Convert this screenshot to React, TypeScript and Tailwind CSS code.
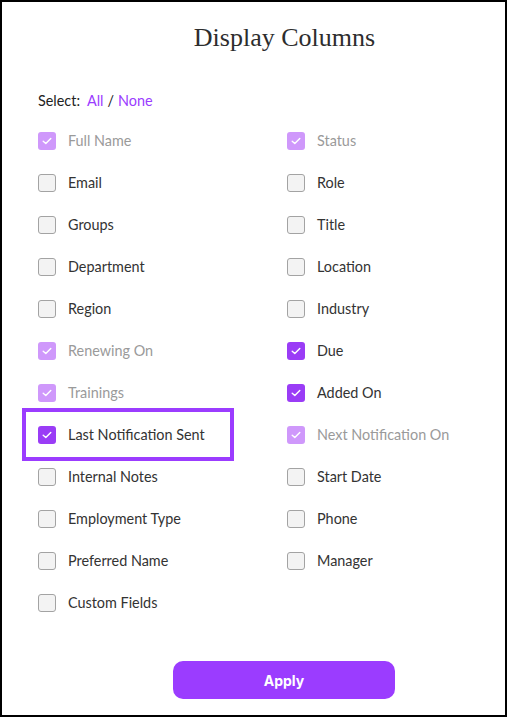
import React from 'react';

type Item = { label: string; state: 'off' | 'on' | 'locked'; highlight?: boolean };

const left: Item[] = [
  { label: 'Full Name', state: 'locked' },
  { label: 'Email', state: 'off' },
  { label: 'Groups', state: 'off' },
  { label: 'Department', state: 'off' },
  { label: 'Region', state: 'off' },
  { label: 'Renewing On', state: 'locked' },
  { label: 'Trainings', state: 'locked' },
  { label: 'Last Notification Sent', state: 'on', highlight: true },
  { label: 'Internal Notes', state: 'off' },
  { label: 'Employment Type', state: 'off' },
  { label: 'Preferred Name', state: 'off' },
  { label: 'Custom Fields', state: 'off' },
];

const right: Item[] = [
  { label: 'Status', state: 'locked' },
  { label: 'Role', state: 'off' },
  { label: 'Title', state: 'off' },
  { label: 'Location', state: 'off' },
  { label: 'Industry', state: 'off' },
  { label: 'Due', state: 'on' },
  { label: 'Added On', state: 'on' },
  { label: 'Next Notification On', state: 'locked' },
  { label: 'Start Date', state: 'off' },
  { label: 'Phone', state: 'off' },
  { label: 'Manager', state: 'off' },
];

function Box({ state }: { state: Item['state'] }) {
  if (state === 'off') {
    return <span className="w-[18px] h-[18px] rounded-[3px] border border-[#a3a3a3] bg-[#f3f3f3] shrink-0" />;
  }
  return (
    <span
      className={`w-[18px] h-[18px] rounded-[3px] shrink-0 flex items-center justify-center ${
        state === 'on' ? 'bg-[#9a3cf6]' : 'bg-[#cf98fb]'
      }`}
    >
      <svg width="12" height="12" viewBox="0 0 12 12" fill="none">
        <path d="M2.2 6.2 L4.8 8.6 L9.8 3.4" stroke="white" strokeWidth="1.4" strokeLinecap="round" strokeLinejoin="round" />
      </svg>
    </span>
  );
}

function Row({ item }: { item: Item }) {
  return (
    <div className="relative h-[42px] flex items-center gap-[12px]">
      {item.highlight && (
        <div className="absolute left-[-16px] top-[-6px] w-[212px] h-[53px] border-4 border-[#9b3cff]" />
      )}
      <Box state={item.state} />
      <span className={`text-[14.4px] ${item.state === 'locked' ? 'text-[#9a9a9a]' : 'text-[#333333]'}`}>
        {item.label}
      </span>
    </div>
  );
}

export default function App() {
  return (
    <div
      className="w-[507px] h-[717px] border-2 border-black bg-white flex flex-col"
      style={{ fontFamily: 'Lato, "Open Sans", sans-serif' }}
    >
      <div
        className="h-[70px] flex items-center justify-center pl-[62px] text-[26px] text-[#2d2d2d]"
        style={{ fontFamily: '"Liberation Serif", serif' }}
      >
        Display Columns
      </div>
      <div className="h-[38px] mt-[10px] pl-[36px] flex items-center text-[14.4px] text-[#222]">
        <span>Select:</span>
        <span className="ml-[7px] text-[#9b3cff]">All</span>
        <span className="mx-[4px]">/</span>
        <span className="text-[#9b3cff]">None</span>
      </div>
      <div className="grid grid-cols-[249px_1fr] pl-[36px]">
        <div className="flex flex-col">
          {left.map(i => (
            <Row key={i.label} item={i} />
          ))}
        </div>
        <div className="flex flex-col">
          {right.map(i => (
            <Row key={i.label} item={i} />
          ))}
        </div>
      </div>
      <div className="mt-[37px] pl-[171px]">
        <button className="w-[222px] h-[38px] rounded-[10px] bg-[#9b3cff] text-white text-[14px] font-bold" style={{ fontFamily: 'Inter, sans-serif' }}>
          Apply
        </button>
      </div>
    </div>
  );
}
